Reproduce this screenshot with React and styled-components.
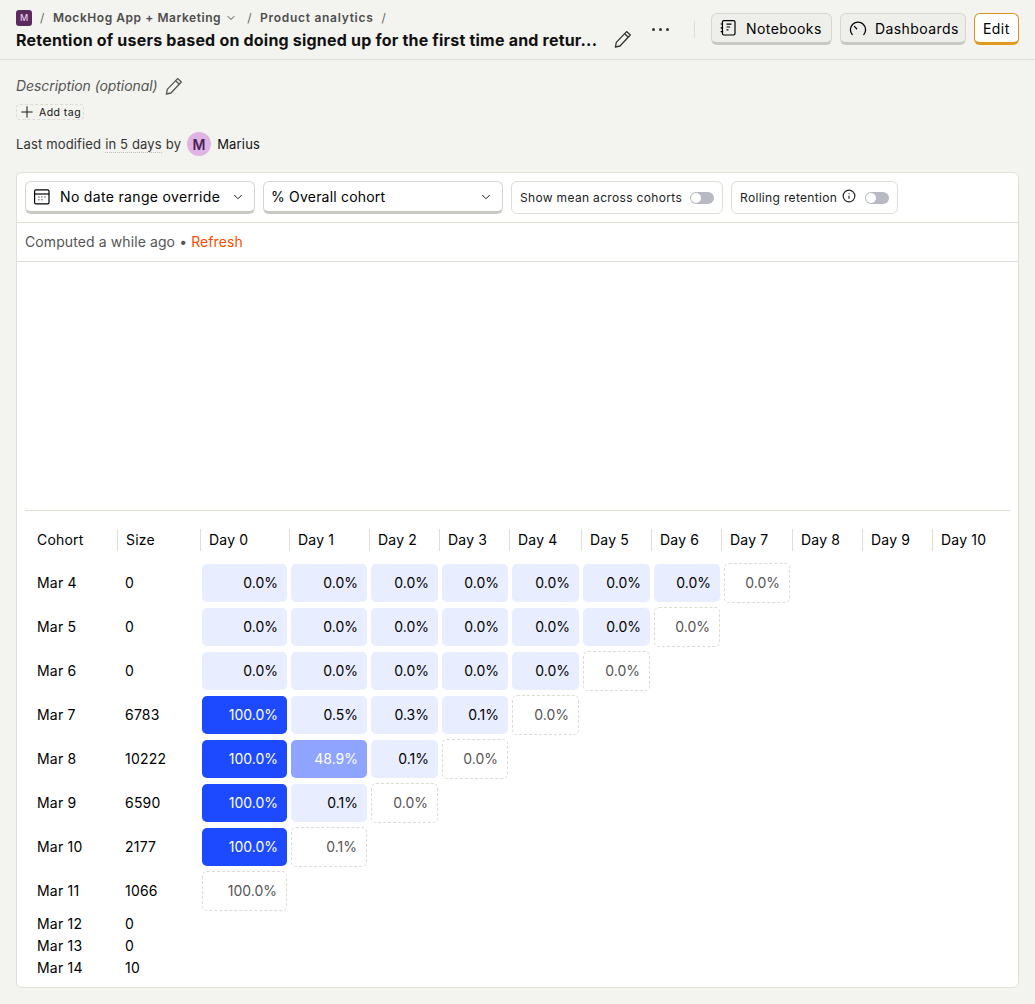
import styled, { createGlobalStyle } from "styled-components";
import { ChevronDown, Info, Plus } from "lucide-react";

const GlobalStyle = createGlobalStyle`
  html, body {
    margin: 0;
    background: #f3f4ef;
    color: #111;
    font-family: Inter, "Liberation Sans", sans-serif;
  }
  * { box-sizing: border-box; }
  svg { flex-shrink: 0; }
`;

const Page = styled.div`
  width: 1035px;
  height: 1004px;
  overflow: hidden;
`;

const TopBar = styled.header`
  display: flex;
  align-items: flex-start;
  height: 60px;
  padding: 0 16px;
  border-bottom: 1px solid #dfdfd8;
`;

const TitleBlock = styled.div`
  width: 582px;
  padding-top: 9px;
`;

const Crumbs = styled.div`
  display: flex;
  align-items: center;
  height: 17px;
  font-size: 12px;
  font-weight: 600;
  letter-spacing: 0.55px;
  color: #4d4d4d;
`;

const ProjectBadge = styled.span`
  display: flex;
  align-items: center;
  justify-content: center;
  width: 16px;
  height: 16px;
  border-radius: 3px;
  background: #5b2a5f;
  color: #e6c8ea;
  font-size: 9px;
  font-weight: 500;
  letter-spacing: 0;
`;

const Slash = styled.span`
  margin: 0 ${(p) => p.$after || 8}px 0 8px;
  font-weight: 400;
  color: #666;
`;

const CrumbChevron = styled(ChevronDown)`
  margin: 0 2px 0 4px;
`;

const CrumbText = styled.span`
  letter-spacing: 0.72px;
`;

const Title = styled.h1`
  margin: 2px 0 0;
  font-size: 16px;
  line-height: 24px;
  font-weight: 700;
  letter-spacing: 0.2px;
  white-space: nowrap;
`;

const TitleEdit = styled.span`
  display: flex;
  margin: 29px 0 0 15px;
  color: #333;
`;

const Dots = styled.span`
  display: flex;
  gap: 4px;
  margin: 28px 0 0 19px;

  i {
    width: 3px;
    height: 3px;
    border-radius: 50%;
    background: #333;
  }
`;

const Divider = styled.span`
  width: 1px;
  height: 17px;
  margin: 21px 16px 0 25px;
  background: #dfdfd8;
`;

const HeaderActions = styled.div`
  display: flex;
  gap: 8px;
  margin-top: 13px;
`;

const ActionButton = styled.button`
  display: flex;
  align-items: center;
  gap: 8px;
  width: ${(p) => p.$width}px;
  height: 32px;
  padding: 0 8px;
  border: 1px solid ${(p) => (p.$primary ? "#d8921e" : "#d6d6d0")};
  border-bottom: 3px solid ${(p) => (p.$primary ? "#e3981f" : "#c9c9c4")};
  border-radius: 6px;
  background: ${(p) => (p.$primary ? "#fff" : "#eeefea")};
  color: #000;
  font: 400 14px Inter, sans-serif;
  letter-spacing: 0.42px;
`;

const Meta = styled.section`
  padding: 15px 16px 0;
`;

const Description = styled.div`
  display: flex;
  align-items: center;
  gap: 6px;
  height: 21px;
  font-size: 14px;
  font-style: italic;
  letter-spacing: -0.08px;
  color: #555;
`;

const AddTag = styled.span`
  display: flex;
  align-items: center;
  gap: 3px;
  width: 68px;
  height: 16px;
  margin-top: 8px;
  padding-left: 1px;
  border: 1px dashed #dcdcd4;
  border-radius: 4px;
  font-size: 10.5px;
  font-weight: 400;
  letter-spacing: 0.45px;
`;

const Modified = styled.div`
  display: flex;
  align-items: center;
  height: 24px;
  margin-top: 12px;
  font-size: 13px;
  letter-spacing: 0.15px;
  color: #333;
`;

const Dotted = styled.span`
  margin: 0 4px;
  border-bottom: 1px dotted #bbb;
`;

const Avatar = styled.span`
  display: flex;
  align-items: center;
  justify-content: center;
  width: 24px;
  height: 24px;
  margin: 0 6px 0 6px;
  border-radius: 50%;
  background: #dfb3e3;
  color: #4b1f58;
  font-size: 14px;
  font-weight: 600;
`;

const UserName = styled.span`
  font-weight: 400;
  letter-spacing: 0.2px;
  color: #111;
`;

const Card = styled.main`
  width: 1003px;
  height: 816px;
  margin: 16px 0 0 16px;
  border: 1px solid #e0dfd6;
  border-radius: 6px;
  background: #fff;
`;

const Toolbar = styled.div`
  display: flex;
  gap: 8px;
  height: 50px;
  padding: 8px;
  border-bottom: 1px solid #e0dfd6;
`;

const Select = styled.button`
  display: flex;
  align-items: center;
  justify-content: space-between;
  width: ${(p) => p.$width}px;
  height: 33px;
  padding: 0 9px 0 8px;
  border: 1px solid #d6d6d0;
  border-bottom: 3px solid #c9c9c4;
  border-radius: 6px;
  background: #fff;
  color: #000;
  font: 400 14px Inter, sans-serif;
  letter-spacing: 0.33px;
`;

const SelectLabel = styled.span`
  display: flex;
  align-items: center;
  gap: 10px;
  margin-left: ${(p) => (p.$tight ? -1 : 0)}px;
  letter-spacing: ${(p) => (p.$tight ? 0.2 : 0.33)}px;
`;

const SwitchBox = styled.label`
  display: flex;
  align-items: center;
  width: ${(p) => p.$width}px;
  height: 33px;
  padding: 0 0 0 8px;
  border: 1px solid #e0dfd6;
  border-radius: 6px;
  font-size: 12px;
  letter-spacing: 0.33px;
  white-space: nowrap;
  color: #222;
`;

const InfoIcon = styled(Info)`
  margin: 0 0 3px 5px;
`;

const Track = styled.span`
  display: flex;
  align-items: center;
  width: 24px;
  height: 12px;
  margin-left: ${(p) => p.$gap}px;
  padding: 1px;
  border-radius: 6px;
  background: #b7bac2;

  i {
    width: 10px;
    height: 10px;
    border-radius: 50%;
    background: #fff;
  }
`;

const Computed = styled.div`
  height: 39px;
  padding: 0 8px;
  border-bottom: 1px solid #e0dfd6;
  font-size: 14px;
  line-height: 38px;
  letter-spacing: 0.1px;
  color: #555;

  a { color: #f54e00; }
`;

const ChartArea = styled.div`
  height: 248px;
`;

const TableWrap = styled.div`
  margin: 0 8px;
  padding-top: 18px;
  border-top: 1px solid #e0dfd6;
`;

const Table = styled.table`
  width: 985px;
  table-layout: fixed;
  border-collapse: collapse;
  font-size: 14px;
  font-weight: 400;
  letter-spacing: 0.2px;
  color: #000;
`;

const HeadCell = styled.th`
  height: 32px;
  padding: 0;
  vertical-align: top;
  text-align: left;
  font-weight: 400;
`;

const HeadLabel = styled.span`
  display: block;
  height: 22px;
  margin-left: ${(p) => (p.$nudge ? -1 : 0)}px;
  padding-left: ${(p) => (p.$first ? 12 : 8)}px;
  border-left: ${(p) => (p.$first ? "none" : "1px solid #e0dfd6")};
  line-height: 22px;
`;

const Row = styled.tr`
  height: ${(p) => (p.$compact ? 22 : 44)}px;
`;

const TextCell = styled.td`
  padding: 0 0 2px ${(p) => p.$pad}px;
`;

const PctCell = styled.td`
  padding: 0 2px;
`;

const Pct = styled.div`
  height: ${(p) => (p.$pending ? 40 : 38)}px;
  padding-right: 9px;
  border: ${(p) => (p.$pending ? "1px dashed #dcdcd4" : "none")};
  border-radius: 5px;
  background: ${(p) => (p.$pending ? "#fff" : p.$bg)};
  color: ${(p) => (p.$pending ? "#555" : p.$light ? "#fff" : "#000")};
  line-height: 38px;
  letter-spacing: 0;
  text-align: right;
`;

const Pencil = () => (
  <svg width="20" height="20" viewBox="0 0 20 20" fill="none" stroke="currentColor" strokeWidth="1.3" strokeLinejoin="round">
    <path d="M13.6 2.6 17.3 6 7 17l-4.6 1 .9-4.6z" />
    <path d="M11.6 4.8 15.3 8.3" />
  </svg>
);

const NotebookIcon = () => (
  <svg width="18" height="18" viewBox="0 0 18 18" fill="none" stroke="currentColor" strokeWidth="1.2">
    <rect x="2.4" y="1.6" width="12.6" height="14.4" rx="1.4" />
    <path d="M.6 5h2.6M.6 8.8h2.6M.6 12.6h2.6M6.5 5.2h5M6.5 8h3.6M6.5 10.8h2" />
  </svg>
);

const GaugeIcon = () => (
  <svg width="18" height="18" viewBox="0 0 18 18" fill="none" stroke="currentColor" strokeWidth="1.3" strokeLinecap="round">
    <path d="M3.2 15.6a7.6 7.6 0 1 1 11.6 0" />
    <path d="M5.4 7.4 7.6 9.8" />
  </svg>
);

const CalendarIcon = () => (
  <svg width="16" height="16" viewBox="0 0 16 16" fill="none" stroke="currentColor" strokeWidth="1.2">
    <rect x=".6" y=".8" width="14.4" height="14" rx="1.4" />
    <path d="M.6 5h14.4" />
    <path d="M4.4 8h1M7.4 8h1M10.4 8h1M4.4 10.8h1M7.4 10.8h1" strokeWidth="1.1" />
  </svg>
);

const columns = [92, 83, 89, 80, 71, 70, 71, 71, 70, 70, 70, 70, 78];
const days = Array.from({ length: 11 }, (_, i) => `Day ${i}`);
const nudged = [3, 4, 6, 7];

const light = "#e8edff";
const blue = "#1d4aff";

const rows = [
  { cohort: "Mar 4", size: "0", values: ["0.0", "0.0", "0.0", "0.0", "0.0", "0.0", "0.0", "0.0"] },
  { cohort: "Mar 5", size: "0", values: ["0.0", "0.0", "0.0", "0.0", "0.0", "0.0", "0.0"] },
  { cohort: "Mar 6", size: "0", values: ["0.0", "0.0", "0.0", "0.0", "0.0", "0.0"] },
  { cohort: "Mar 7", size: "6783", values: ["100.0", "0.5", "0.3", "0.1", "0.0"] },
  { cohort: "Mar 8", size: "10222", values: ["100.0", "48.9", "0.1", "0.0"] },
  { cohort: "Mar 9", size: "6590", values: ["100.0", "0.1", "0.0"] },
  { cohort: "Mar 10", size: "2177", values: ["100.0", "0.1"] },
  { cohort: "Mar 11", size: "1066", values: ["100.0"] },
  { cohort: "Mar 12", size: "0", values: [], compact: true },
  { cohort: "Mar 13", size: "0", values: [], compact: true },
  { cohort: "Mar 14", size: "10", values: [], compact: true },
];

function cellColor(value) {
  if (value === "100.0") return blue;
  if (value === "48.9") return "#8ea4ff";
  return light;
}

export default function App() {
  return (
    <Page>
      <GlobalStyle />
      <TopBar>
        <TitleBlock>
          <Crumbs>
            <ProjectBadge>M</ProjectBadge>
            <Slash>/</Slash>
            MockHog App + Marketing
            <CrumbChevron size={12} />
            <Slash>/</Slash>
            <CrumbText>Product analytics</CrumbText>
            <Slash>/</Slash>
          </Crumbs>
          <Title>Retention of users based on doing signed up for the first time and retur...</Title>
        </TitleBlock>
        <TitleEdit><Pencil /></TitleEdit>
        <Dots><i /><i /><i /></Dots>
        <Divider />
        <HeaderActions>
          <ActionButton $width={121}><NotebookIcon /> Notebooks</ActionButton>
          <ActionButton $width={126}><GaugeIcon /> Dashboards</ActionButton>
          <ActionButton $width={45} $primary>Edit</ActionButton>
        </HeaderActions>
      </TopBar>

      <Meta>
        <Description>Description (optional) <Pencil /></Description>
        <AddTag><Plus size={18} strokeWidth={1.3} /> Add tag</AddTag>
        <Modified>
          Last modified <Dotted>in 5 days</Dotted> by
          <Avatar>M</Avatar>
          <UserName>Marius</UserName>
        </Modified>
      </Meta>

      <Card>
        <Toolbar>
          <Select $width={230}>
            <SelectLabel><CalendarIcon /> No date range override</SelectLabel>
            <ChevronDown size={14} strokeWidth={1.5} />
          </Select>
          <Select $width={240}>
            <SelectLabel $tight>% Overall cohort</SelectLabel>
            <ChevronDown size={14} strokeWidth={1.5} />
          </Select>
          <SwitchBox $width={212}>
            Show mean across cohorts
            <Track $gap={8}><i /></Track>
          </SwitchBox>
          <SwitchBox $width={167}>
            Rolling retention
            <InfoIcon size={14} />
            <Track $gap={9}><i /></Track>
          </SwitchBox>
        </Toolbar>
        <Computed>Computed a while ago • <a>Refresh</a></Computed>
        <ChartArea />
        <TableWrap>
          <Table>
            <colgroup>
              {columns.map((w, i) => <col key={i} style={{ width: w }} />)}
            </colgroup>
            <thead>
              <tr>
                <HeadCell><HeadLabel $first>Cohort</HeadLabel></HeadCell>
                <HeadCell><HeadLabel>Size</HeadLabel></HeadCell>
                {days.map((d, i) => (
                  <HeadCell key={d}><HeadLabel $nudge={nudged.includes(i)}>{d}</HeadLabel></HeadCell>
                ))}
              </tr>
            </thead>
            <tbody>
              {rows.map((row) => (
                <Row key={row.cohort} $compact={row.compact}>
                  <TextCell $pad={12}>{row.cohort}</TextCell>
                  <TextCell $pad={8}>{row.size}</TextCell>
                  {days.map((d, i) => {
                    const value = row.values[i];
                    if (value === undefined) return <PctCell key={d} />;
                    const pending = i === row.values.length - 1;
                    return (
                      <PctCell key={d}>
                        <Pct
                          $pending={pending}
                          $bg={cellColor(value)}
                          $light={value === "100.0" || value === "48.9"}
                        >
                          {value}%
                        </Pct>
                      </PctCell>
                    );
                  })}
                </Row>
              ))}
            </tbody>
          </Table>
        </TableWrap>
      </Card>
    </Page>
  );
}
